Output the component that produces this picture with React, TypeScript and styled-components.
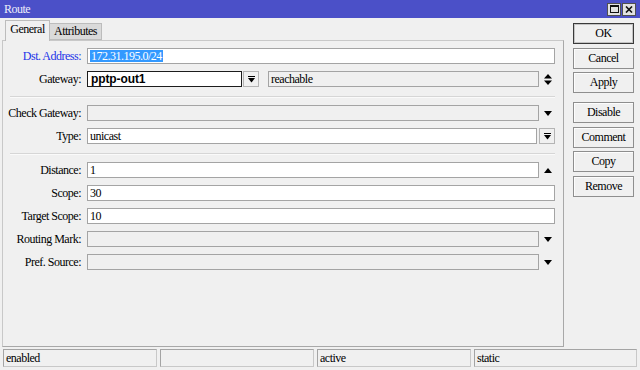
import styled, { createGlobalStyle } from 'styled-components';

const GlobalStyle = createGlobalStyle`
  html, body {
    margin: 0;
    padding: 0;
    background: #f0f0f0;
  }
  body {
    font-family: "Liberation Serif", "Times New Roman", serif;
    font-size: 12px;
    letter-spacing: -0.5px;
    color: #000;
  }
  * {
    box-sizing: border-box;
  }
`;

const Window = styled.div`
  width: 640px;
  height: 370px;
  display: flex;
  flex-direction: column;
  background: #f0f0f0;
  overflow: hidden;
`;

const TitleBar = styled.div`
  height: 18px;
  flex: none;
  background: #4b50c8;
  color: #eeeefa;
  display: flex;
  align-items: center;
  justify-content: space-between;
  padding: 0 4px 0 4px;
  font-size: 12px;
`;

const TitleButtons = styled.div`
  display: flex;
  gap: 1px;
`;

const TitleButton = styled.div`
  width: 14px;
  height: 13px;
  background: #e2e2e2;
  border: 1px solid #505050;
  display: flex;
  align-items: center;
  justify-content: center;
`;

const Body = styled.div`
  flex: 1;
  display: flex;
  min-height: 0;
`;

const LeftColumn = styled.div`
  width: 562px;
  margin-left: 2px;
  display: flex;
  flex-direction: column;
`;

const TabRow = styled.div`
  height: 22px;
  flex: none;
  display: flex;
  align-items: flex-end;
  padding-left: 3px;
`;

const Tab = styled.div<{ $active?: boolean }>`
  height: ${(p) => (p.$active ? '21px' : '17px')};
  margin-bottom: ${(p) => (p.$active ? '-1px' : '0')};
  position: relative;
  z-index: ${(p) => (p.$active ? 1 : 0)};
  width: ${(p) => (p.$active ? '45px' : '52px')};
  background: ${(p) => (p.$active ? '#f0f0f0' : '#dadada')};
  border: 1px solid #bcbcbc;
  border-bottom: ${(p) => (p.$active ? 'none' : '1px solid #bcbcbc')};
  border-left: ${(p) => (p.$active ? '1px solid #bcbcbc' : 'none')};
  display: flex;
  align-items: center;
  justify-content: center;
  padding-bottom: ${(p) => (p.$active ? '3px' : '0')};
`;

const Panel = styled.div`
  flex: 1;
  border: 1px solid #a8a8a8;
  border-top-color: #c8c8c8;
  border-left-color: #c8c8c8;
  padding: 7px 8px 0 0;
`;

const Form = styled.div`
  display: flex;
  flex-direction: column;
  gap: 7px;
`;

const Row = styled.div`
  display: grid;
  grid-template-columns: 78px 1fr;
  column-gap: 6px;
  align-items: center;
  height: 16px;
`;

const Label = styled.div<{ $accent?: boolean }>`
  text-align: right;
  white-space: nowrap;
  color: ${(p) => (p.$accent ? '#2233e8' : '#000')};
  line-height: 16px;
`;

const FieldLine = styled.div`
  display: flex;
  align-items: center;
  height: 16px;
`;

const Input = styled.div<{ $disabled?: boolean; $width?: number; $focused?: boolean }>`
  height: 16px;
  flex: ${(p) => (p.$width ? 'none' : '1')};
  width: ${(p) => (p.$width ? `${p.$width}px` : 'auto')};
  background: ${(p) => (p.$disabled ? '#f0f0f0' : '#fff')};
  border: 1px solid ${(p) => (p.$focused ? '#1c1c1c' : '#a4a4a4')};
  padding: 0 2px;
  line-height: 14px;
  white-space: nowrap;
  overflow: hidden;
`;

const BoldValue = styled.span`
  font-family: "Liberation Sans", Arial, sans-serif;
  font-weight: bold;
  font-size: 12px;
  letter-spacing: -0.1px;
  padding-left: 1px;
`;

const Selected = styled.span`
  background: #3399ff;
  color: #fff;
  display: inline-block;
  line-height: 12px;
  padding: 0 1px;
  margin-top: 1px;
`;

const IconSlot = styled.div`
  width: 16px;
  height: 16px;
  flex: none;
  display: flex;
  align-items: center;
  justify-content: center;
  padding-left: 1px;
`;

const SmallButton = styled.div<{ $gap?: number }>`
  width: 16px;
  height: 16px;
  flex: none;
  margin-left: ${(p) => p.$gap ?? 2}px;
  background: #f0f0f0;
  border: 1px solid #b4b4b4;
  display: flex;
  align-items: center;
  justify-content: center;
`;

const Separator = styled.div`
  margin: 2px 0 0 7px;
  height: 2px;
  border-top: 1px solid #d6d6d6;
  border-bottom: 1px solid #fafafa;
`;

const ButtonColumn = styled.div`
  width: 61px;
  margin-left: 9px;
  padding-top: 5px;
  display: flex;
  flex-direction: column;
`;

const ButtonGroup = styled.div`
  display: flex;
  flex-direction: column;
  gap: 3.5px;
  & + & {
    margin-top: 9px;
  }
`;

const Button = styled.div<{ $default?: boolean }>`
  height: 21px;
  background: #f0f0f0;
  border: 1px solid ${(p) => (p.$default ? '#3a3a3a' : '#8e8e8e')};
  box-shadow: ${(p) => (p.$default ? 'inset 0 0 0 1px #c4c4c4' : 'inset 1px 1px 0 #fdfdfd')};
  display: flex;
  align-items: center;
  justify-content: center;
  line-height: 19px;
`;

const StatusBar = styled.div`
  height: 23px;
  flex: none;
  display: flex;
  gap: 3px;
  padding: 2px 3px 3px 3px;
`;

const StatusCell = styled.div<{ $grow?: boolean }>`
  width: ${(p) => (p.$grow ? 'auto' : '154px')};
  flex: ${(p) => (p.$grow ? '1' : 'none')};
  height: 18px;
  border: 1px solid #c8c8c8;
  border-top-color: #a4a4a4;
  border-left-color: #a4a4a4;
  padding-left: 2px;
  line-height: 16px;
  white-space: nowrap;
`;

const DownTri = () => (
  <svg width="8" height="5" viewBox="0 0 8 5">
    <polygon points="0,0 8,0 4,5" fill="#000" />
  </svg>
);

const UpTri = () => (
  <svg width="8" height="5" viewBox="0 0 8 5">
    <polygon points="0,5 8,5 4,0" fill="#000" />
  </svg>
);

const UpDown = () => (
  <svg width="8" height="11" viewBox="0 0 8 11">
    <polygon points="0,4.5 8,4.5 4,0" fill="#000" />
    <polygon points="0,6.5 8,6.5 4,11" fill="#000" />
  </svg>
);

const BarDown = () => (
  <svg width="7" height="7" viewBox="0 0 7 7">
    <rect x="0" y="0" width="7" height="1" fill="#000" />
    <polygon points="0,2 7,2 3.5,6.5" fill="#000" />
  </svg>
);

const MaxIcon = () => (
  <svg width="9" height="8" viewBox="0 0 9 8">
    <rect x="0.5" y="0.5" width="8" height="7" fill="none" stroke="#111" />
    <rect x="0" y="0" width="9" height="2" fill="#111" />
  </svg>
);

const CloseIcon = () => (
  <svg width="8" height="7" viewBox="0 0 8 7">
    <path d="M1 0.5 L7 6.5 M7 0.5 L1 6.5" stroke="#111" strokeWidth="1.6" />
  </svg>
);

export default function App() {
  return (
    <>
      <GlobalStyle />
      <Window>
        <TitleBar>
          <span>Route</span>
          <TitleButtons>
            <TitleButton>
              <MaxIcon />
            </TitleButton>
            <TitleButton>
              <CloseIcon />
            </TitleButton>
          </TitleButtons>
        </TitleBar>
        <Body>
          <LeftColumn>
            <TabRow>
              <Tab $active>General</Tab>
              <Tab>Attributes</Tab>
            </TabRow>
            <Panel>
              <Form>
                <Row>
                  <Label $accent>Dst. Address:</Label>
                  <FieldLine>
                    <Input>
                      <Selected>172.31.195.0/24</Selected>
                    </Input>
                  </FieldLine>
                </Row>
                <Row>
                  <Label>Gateway:</Label>
                  <FieldLine>
                    <Input $width={155} $focused>
                      <BoldValue>pptp-out1</BoldValue>
                    </Input>
                    <SmallButton $gap={1}>
                      <BarDown />
                    </SmallButton>
                    <Input $disabled style={{ marginLeft: 9 }}>
                      reachable
                    </Input>
                    <IconSlot>
                      <UpDown />
                    </IconSlot>
                  </FieldLine>
                </Row>
                <Separator />
                <Row>
                  <Label>Check Gateway:</Label>
                  <FieldLine>
                    <Input $disabled />
                    <IconSlot>
                      <DownTri />
                    </IconSlot>
                  </FieldLine>
                </Row>
                <Row>
                  <Label>Type:</Label>
                  <FieldLine>
                    <Input>unicast</Input>
                    <SmallButton>
                      <BarDown />
                    </SmallButton>
                  </FieldLine>
                </Row>
                <Separator />
                <Row>
                  <Label>Distance:</Label>
                  <FieldLine>
                    <Input>1</Input>
                    <IconSlot>
                      <UpTri />
                    </IconSlot>
                  </FieldLine>
                </Row>
                <Row>
                  <Label>Scope:</Label>
                  <FieldLine>
                    <Input>30</Input>
                  </FieldLine>
                </Row>
                <Row>
                  <Label>Target Scope:</Label>
                  <FieldLine>
                    <Input>10</Input>
                  </FieldLine>
                </Row>
                <Row>
                  <Label>Routing Mark:</Label>
                  <FieldLine>
                    <Input $disabled />
                    <IconSlot>
                      <DownTri />
                    </IconSlot>
                  </FieldLine>
                </Row>
                <Row>
                  <Label>Pref. Source:</Label>
                  <FieldLine>
                    <Input $disabled />
                    <IconSlot>
                      <DownTri />
                    </IconSlot>
                  </FieldLine>
                </Row>
              </Form>
            </Panel>
          </LeftColumn>
          <ButtonColumn>
            <ButtonGroup>
              <Button $default>OK</Button>
              <Button>Cancel</Button>
              <Button>Apply</Button>
            </ButtonGroup>
            <ButtonGroup>
              <Button>Disable</Button>
              <Button>Comment</Button>
              <Button>Copy</Button>
              <Button>Remove</Button>
            </ButtonGroup>
          </ButtonColumn>
        </Body>
        <StatusBar>
          <StatusCell>enabled</StatusCell>
          <StatusCell />
          <StatusCell>active</StatusCell>
          <StatusCell $grow>static</StatusCell>
        </StatusBar>
      </Window>
    </>
  );
}
